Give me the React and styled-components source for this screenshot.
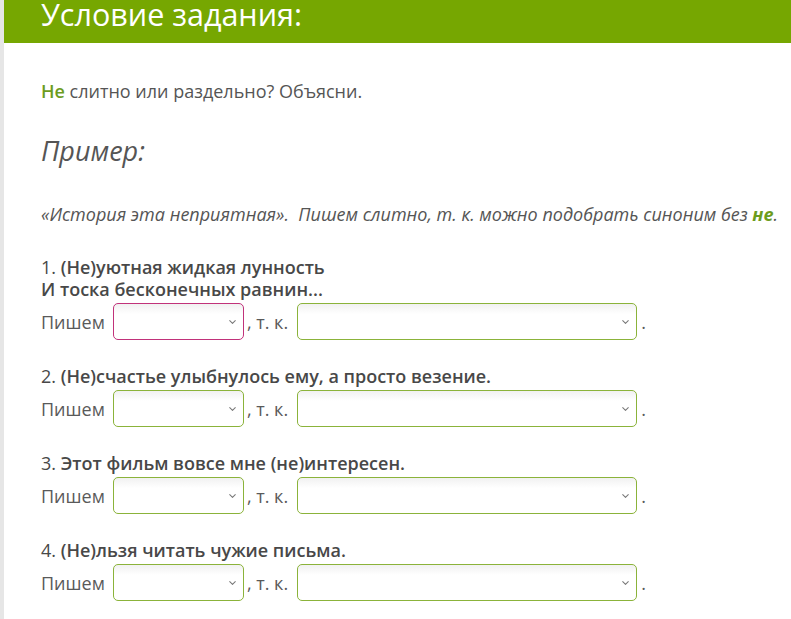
import styled, { createGlobalStyle } from "styled-components";
import { ChevronDown } from "lucide-react";

const GlobalStyle = createGlobalStyle`
  html, body {
    margin: 0;
    padding: 0;
    background: #fff;
  }
  body {
    font-family: "Open Sans", "Noto Sans", sans-serif;
    color: #555;
    overflow: hidden;
  }
`;

const Page = styled.div`
  border-left: 4px solid #e6e6e6;
  min-height: 619px;
  box-sizing: border-box;
`;

const Header = styled.div`
  height: 43px;
  background: #76a701;
  padding-left: 37px;
  overflow: hidden;
`;

const HeaderTitle = styled.h1`
  margin: -6px 0 0;
  font-size: 30.5px;
  font-weight: 400;
  color: #fff;
  line-height: 41px;
`;

const Body = styled.div`
  padding: 36px 0 0 37px;
`;

const Lead = styled.p`
  margin: 0;
  font-size: 18px;
  line-height: 24px;
  color: #555;
`;

const Green = styled.span`
  color: #6c9c1d;
  font-weight: ${(p) => (p.bold ? 700 : 600)};
`;

const ExampleTitle = styled.h2`
  margin: 30px 0 0;
  font-size: 27px;
  font-style: italic;
  font-weight: 400;
  line-height: 36px;
  color: #555;
`;

const ExampleText = styled.p`
  margin: 33px 0 0;
  font-size: 18px;
  font-style: italic;
  line-height: 24px;
  color: #555;
  white-space: nowrap;
`;

const List = styled.div`
  margin-top: 30px;
  display: flex;
  flex-direction: column;
  gap: 25px;
`;

const Item = styled.div`
  display: flex;
  flex-direction: column;
  gap: 3px;
`;

const ItemTitle = styled.div`
  font-size: 18px;
  line-height: 22px;
  font-weight: 600;
  color: #484848;
`;

const Num = styled.span`
  font-weight: 400;
`;

const Row = styled.div`
  display: flex;
  align-items: center;
  height: 37px;
  font-size: 18px;
  color: #5a5a5a;
`;

const Label = styled.span`
  margin-right: 8px;
`;

const Sep = styled.span`
  margin: 0 9px 0 3px;
`;

const Dot = styled.span`
  margin-left: 4px;
`;

const SelectWrap = styled.div`
  position: relative;
  width: ${(p) => p.width}px;
  height: 37px;
`;

const Select = styled.select`
  appearance: none;
  width: 100%;
  height: 100%;
  box-sizing: border-box;
  border: 1px solid ${(p) => (p.active ? "#c1327a" : "#8bb33a")};
  border-radius: 5px;
  background: linear-gradient(#f1f1f1, #fff 10px);
  font-family: inherit;
  font-size: 16px;
  outline: none;
`;

const Arrow = styled(ChevronDown)`
  position: absolute;
  right: 6px;
  top: 50%;
  transform: translateY(-50%);
  color: #777;
  pointer-events: none;
`;

const Dropdown = ({ width, active }) => (
  <SelectWrap width={width}>
    <Select active={active}>
      <option></option>
    </Select>
    <Arrow size={11} strokeWidth={2.2} />
  </SelectWrap>
);

const items = [
  {
    num: "1.",
    lines: ["(Не)уютная жидкая лунность", "И тоска бесконечных равнин..."],
    active: true,
  },
  { num: "2.", lines: ["(Не)счастье улыбнулось ему, а просто везение."] },
  { num: "3.", lines: ["Этот фильм вовсе мне (не)интересен."] },
  { num: "4.", lines: ["(Не)льзя читать чужие письма."] },
];

export default function App() {
  return (
    <>
      <GlobalStyle />
      <Page>
        <Header>
          <HeaderTitle>Условие задания:</HeaderTitle>
        </Header>
        <Body>
          <Lead>
            <Green>Не</Green> слитно или раздельно? Объясни.
          </Lead>
          <ExampleTitle>Пример:</ExampleTitle>
          <ExampleText>
            «История эта неприятная».&nbsp; Пишем слитно, т. к. можно подобрать
            синоним без <Green bold>не</Green>.
          </ExampleText>
          <List>
            {items.map((it) => (
              <Item key={it.num}>
                <ItemTitle>
                  {it.lines.map((l, i) => (
                    <div key={i}>
                      {i === 0 && <Num>{it.num} </Num>}
                      {l}
                    </div>
                  ))}
                </ItemTitle>
                <Row>
                  <Label>Пишем</Label>
                  <Dropdown width={131} active={it.active} />
                  <Sep>, т. к.</Sep>
                  <Dropdown width={340} />
                  <Dot>.</Dot>
                </Row>
              </Item>
            ))}
          </List>
        </Body>
      </Page>
    </>
  );
}
